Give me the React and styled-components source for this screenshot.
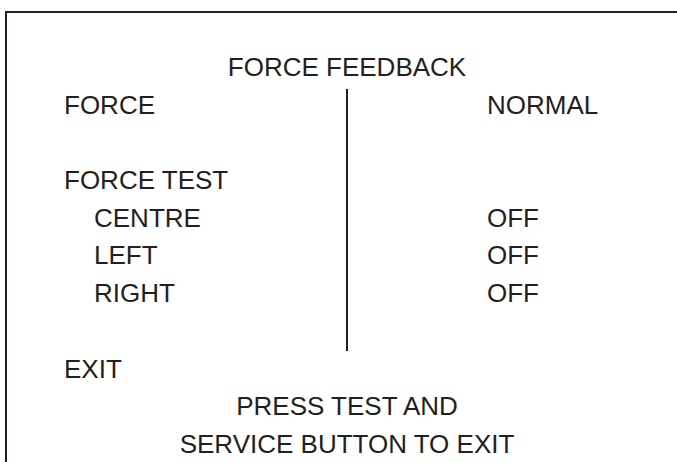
import React from "react"
import styled, { createGlobalStyle } from "styled-components"

const GlobalStyle = createGlobalStyle`
  html, body {
    margin: 0;
    padding: 0;
    background: #ffffff;
    overflow: hidden;
  }
  body {
    font-family: "Liberation Sans", Arial, sans-serif;
    color: #231f20;
  }
`

export default function App() {
  return (
    <>
      <GlobalStyle />
      <Frame>
        <Panel>
          <Title>FORCE FEEDBACK</Title>
          <Body>
            <Column>
              <Line>FORCE</Line>
              <Line />
              <Line>FORCE TEST</Line>
              <Line indent>CENTRE</Line>
              <Line indent>LEFT</Line>
              <Line indent>RIGHT</Line>
              <Line />
            </Column>
            <Divider />
            <ValueColumn>
              <Line>NORMAL</Line>
              <Line />
              <Line />
              <Line>OFF</Line>
              <Line>OFF</Line>
              <Line>OFF</Line>
              <Line />
            </ValueColumn>
          </Body>
          <Column>
            <Line>EXIT</Line>
          </Column>
          <Footer>
            <Line>PRESS TEST AND</Line>
            <Line>SERVICE BUTTON TO EXIT</Line>
          </Footer>
        </Panel>
      </Frame>
    </>
  )
}

// top rule runs to the right edge, the box itself keeps a fixed width
const Frame = styled.div`
  margin: 11px 0 0 5px;
  border-top: 2px solid #231f20;
`

// centred lines sit on the divider (x=347), not on the middle of the view
const Panel = styled.div`
  box-sizing: border-box;
  width: 600px;
  height: 449px;
  border-left: 2px solid #231f20;
  padding-top: 36px;
  font-size: 26px;
`

const Line = styled.div`
  height: 37.7px;
  line-height: 37.7px;
  white-space: nowrap;
  padding-left: ${(p) => (p.indent ? "30px" : "0")};
`

const Title = styled(Line)`
  width: 680px;
  text-align: center;
`

const Body = styled.div`
  display: grid;
  grid-template-columns: 339px 2px 339px;
`

const Column = styled.div`
  display: flex;
  flex-direction: column;
  padding-left: 57px;
`

const ValueColumn = styled.div`
  display: flex;
  flex-direction: column;
  padding-left: 139px;
`

const Divider = styled.div`
  background: #231f20;
  margin: 2px 0 0;
`

const Footer = styled.div`
  display: flex;
  flex-direction: column;
  width: 680px;
  text-align: center;
`
